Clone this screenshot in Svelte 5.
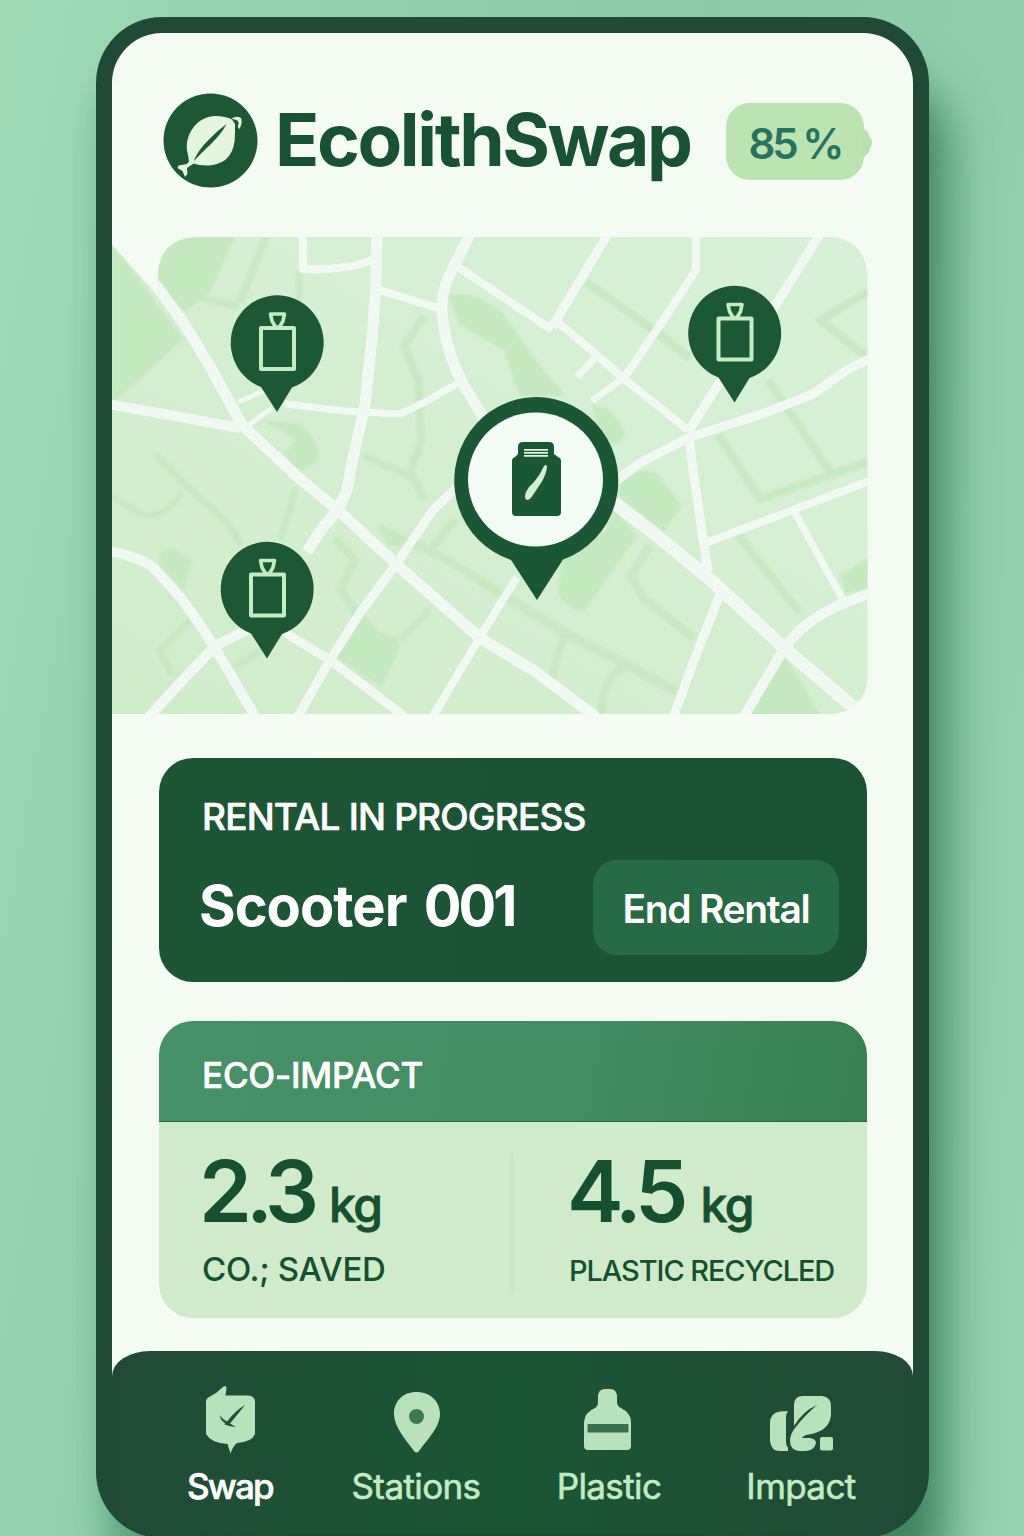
<script>
  const roads = [
    { w: 11, d: 'M106 230L158 288L185 325L212 370L242 425L300 479L338 510L397 565L480 638L536 672L596 717' },
    { w: 10, d: 'M108 404L175 416L240 428' },
    { w: 11, d: 'M377 232L376 285L372 338L365 405L353 458L347 490L338 510Q322 526 307 552' },
    { w: 10, d: 'M262 622L215 646L180 683L148 718' },
    { w: 8, d: 'M303 232V269Q350 271 376 258' },
    { w: 11, d: 'M471 232L455 264Q440 290 442 312Q446 355 465 387L486 422' },
    { w: 8, d: 'M378 290L442 309' },
    { w: 8, d: 'M458 267L500 295L552 330' },
    { w: 9, d: 'M608 234L552 327' },
    { w: 8, d: 'M556 321L597 355L623 378L688 430' },
    { w: 7, d: 'M596 357L577 377M623 378L592 401' },
    { w: 8, d: 'M696 232V270L660 325L624 378' },
    { w: 9, d: 'M820 234L777 303L718 385L688 432' },
    { w: 9, d: 'M872 357L845 371L813 394L765 413L690 437L640 463L612 484' },
    { w: 9, d: 'M689 438L693 470L708 572' },
    { w: 8, d: 'M872 480L793 510L708 542' },
    { w: 7, d: 'M795 513L843 600' },
    { w: 10, d: 'M872 592L840 605Q805 620 785 647L743 718' },
    { w: 13, d: 'M608 498L655 534L713 582L783 647L866 718' },
    { w: 9, d: 'M720 594L693 663L673 718' },
    { w: 10, d: 'M108 551Q135 555 153 567L180 597L197 620L215 648L256 718' },
    { w: 9, d: 'M284 632L330 660L404 716' },
    { w: 9, d: 'M297 718L330 660L360 613L397 563L433 510L456 488' },
    { w: 8, d: 'M432 718L480 637L517 577' },
    { w: 7, d: 'M285 404L345 411L400 414L425 402L460 382' },
    { w: 5, d: 'M246 427L272 408M238 402L264 391' }
  ];
  const lanes = [
    { w: 8, d: 'M266 237L240 302' },
    { w: 7, d: 'M200 298L238 306M299 272V300' },
    { w: 8, d: 'M424 316L404 346L418 380L421 440L410 472L425 500' },
    { w: 7, d: 'M364 456L410 476M155 454L182 482L225 520L242 545' },
    { w: 6, d: 'M112 496L140 514Q166 520 182 492M296 488L280 540' },
    { w: 8, d: 'M586 282L648 326L690 358' },
    { w: 8, d: 'M868 292L820 320L866 356M768 380L802 430L832 475' },
    { w: 8, d: 'M718 434L760 499L868 462M738 535L800 613' },
    { w: 9, d: 'M480 581L560 630L678 692' },
    { w: 8, d: 'M564 634L551 680M622 668Q600 684 602 714' },
    { w: 9, d: 'M650 545L631 576L645 600L694 638' },
    { w: 8, d: 'M380 528L440 556L500 592M455 520L432 548' },
    { w: 8, d: 'M334 538L355 560L340 590L362 620M400 640L430 610' },
    { w: 7, d: 'M190 620L160 650L172 675M236 667L268 645' }
  ];
  const patches = [
    'M112 243L183 339L116 401H112Z',
    'M150 237H235L210 292L185 312L155 280Z',
    'M448 296Q470 288 502 312L520 338L545 372L566 396L520 396L504 350L460 325Z',
    'M592 404L610 410Q630 432 622 440L600 450Z',
    'M625 470L655 472L682 506L664 532L618 496Z',
    'M610 505L637 536L606 580L584 612Q562 606 558 592L562 560L606 530Z',
    'M160 552L172 548L192 560L184 590L160 565Z',
    'M358 608L380 633L396 636L400 648L382 686L336 657Z',
    'M784 657L800 680L822 718H746Z',
    'M868 558L840 576L846 594L868 588Z',
    'M262 420L300 424Q320 440 318 460L300 472L284 454L296 440Z',
    'M378 524L392 530L404 546L388 546Z'
  ];
  const pins = [
    { x: 277, y: 342 },
    { x: 734.5, y: 332.5 },
    { x: 267, y: 588.5 }
  ];
  const tabs = ['Swap', 'Stations', 'Plastic', 'Impact'];
  const stats = [
    { value: '2.3', unit: 'kg', label: 'CO.; SAVED', kind: 'co2' },
    { value: '4.5', unit: 'kg', label: 'PLASTIC RECYCLED', kind: 'plastic' }
  ];
</script>

<div class="stage">
  <div class="phone">
    <main class="screen">
      <header>
        <svg class="logo" viewBox="163 93 95 95">
          <circle cx="210.5" cy="140.5" r="47" fill="#1c5833" />
          <path fill="#e3f6dc" d="M189 161.500L188 155Q185 145 189 135Q197 117 215 116Q226 116 232 119.500L235 124L235 134Q235 148 229 156Q223 164 210 165.500Q200 166 193.500 163.500L187 168L187.500 174L185 177L182.500 171L177.500 168L178.500 165.500L187 164Z" />
          <path fill="#1c5833" d="M226.500 124Q222 133 211 144Q201 153 193.500 161.500Q198 150 208.500 140Q217 131 226.500 124Z" />
          <path fill="#e3f6dc" d="M231.500 118.500Q237 115.500 241 118Q243 122 239.500 129Q237 127 238.500 124Q239 120.500 236 120Z" />
        </svg>
        <h1>EcolithSwap</h1>
        <div class="battery"><span>85 %</span>
          <svg class="nub" viewBox="0 0 9 32"><path d="M0 1L4 3Q6 5 6.500 9L8.500 12Q9.500 16 8 19L6.500 21Q6 26 3 27L0 31Z" fill="#b7e2ae" /></svg>
        </div>
      </header>

      <svg class="map" viewBox="112 237 756 477">
        <defs>
          <clipPath id="area">
            <path d="M112 243L155 293L160 289Q158 282 158 273Q160 240 195 237H833Q865 241 867.500 275V678Q866 709 834 714H112Z" />
          </clipPath>
          <linearGradient id="land" x1="0" y1="1" x2="1" y2="0">
            <stop offset="0" stop-color="#d0edca" /><stop offset="1" stop-color="#d7f1d6" />
          </linearGradient>
          <filter id="soft"><feGaussianBlur stdDeviation="1" /></filter>
        </defs>
        <g clip-path="url(#area)">
          <rect x="112" y="237" width="756" height="477" fill="url(#land)" />
          <g filter="url(#soft)">
            {#each patches as d}<path {d} fill="#c2e7bb" opacity=".85" />{/each}
            {#each lanes as l}<path d={l.d} stroke="#c4e8be" stroke-width={l.w} fill="none" opacity=".85" stroke-linejoin="round" />{/each}
          </g>
          {#each roads as r}<path d={r.d} stroke="#f0f9f1" stroke-width={r.w} fill="none" stroke-linejoin="round" />{/each}
        </g>
        {#each pins as p}
          <g transform="translate({p.x} {p.y})">
            <path fill="#1c5833" d="M-16 45A46.500 47.300 0 1 1 15 45.500L0 70Z" />
            <g fill="none" stroke="#c5ebc0" stroke-width="4" stroke-linejoin="round">
              <rect x="-16" y="-14" width="33" height="41" />
              <path stroke-width="3.600" d="M-6.500 -28H7.500L6 -21L2.500 -15H-1.500L-5 -21Z" />
            </g>
          </g>
        {/each}
        <path fill="#1a5735" d="M511 560A82 83.500 0 1 1 563 559.500L537 600Z" />
        <ellipse cx="535.500" cy="479.500" rx="67.500" ry="67" fill="#f3fbf5" />
        <path fill="#1a5735" d="M518 447Q518 442 523 442H549Q554 442 554 447V454L558 457Q561 458 561 461V512Q561 516 557 516H516Q512 516 512 512V461Q512 458 515 457L518 454Z" />
        <path stroke="#e5f5e5" stroke-width="1.800" d="M524 449.800H548M524 452.800H548M524 455.800H548" />
        <path fill="#d2f0cb" d="M544 466Q547 463.500 547 467.500Q546 475 541 483L532 496.500Q529 501 526 499.500Q524 497 526 492Q529 486 534 482Q540 475 544 466Z" />
      </svg>

      <section class="rental">
        <div class="caption">RENTAL IN PROGRESS</div>
        <div class="row">
          <h2>Scooter <span>001</span></h2>
          <button><span>End Rental</span></button>
        </div>
      </section>

      <section class="eco">
        <div class="head">ECO-IMPACT</div>
        <div class="stats">
          {#each stats as s}
            <div class="stat {s.kind}">
              <div class="amount"><strong>{s.value}</strong><em>{s.unit}</em></div>
              <div class="label">{s.label}</div>
            </div>
          {/each}
        </div>
      </section>
    </main>

    <nav>
      {#each tabs as t}
        <a class="tab-{t.toLowerCase()}" href="#{t}">
          {#if t === 'Swap'}
            <svg viewBox="195 1385 70 70"><path fill="#b9e2bb" d="M206 1402Q206 1398 210 1396.500L216 1393L223 1387Q226 1384.500 226.500 1388L225.500 1395.500H248Q255 1396 255 1402V1434Q252 1442 237 1443Q233 1446 230.500 1453.500L227.500 1444Q211 1443 206 1434Z" /><path fill="#1c5436" d="M220 1415.500Q223 1420 227 1421.500Q236 1410 245 1405Q238 1414 230 1423.500L236 1427Q230 1426.500 224.500 1424.500L225 1423Q220 1420 220 1415.500Z" /></svg>
          {:else if t === 'Stations'}
            <svg viewBox="381 1385 70 70"><path fill="#b9e2bb" d="M416.500 1392C430 1392 440 1401 440 1414C440 1427 427 1440 419 1451Q416.500 1454 414 1451C406 1440 394 1427 394 1414C394 1401 403 1392 416.500 1392Z" /><circle cx="416.500" cy="1416.500" r="7.500" fill="#3a7a51" /></svg>
          {:else if t === 'Plastic'}
            <svg viewBox="574 1385 70 70"><path fill="#b9e2bb" d="M598 1397Q598 1389 605 1389H610Q617 1389 617 1397V1402Q617 1406 621 1408Q631 1413 631 1422V1446Q631 1450 627 1450H588Q584 1450 584 1446V1422Q585 1412 595 1408Q598 1406 598 1402Z" /><rect x="587.500" y="1424" width="41" height="8.500" rx="1" fill="#35734c" /></svg>
          {:else}
            <svg viewBox="766 1385 70 70"><g fill="#b9e2bb"><path d="M788 1411L780 1411.500Q770 1413 770 1423V1441Q771 1451 780 1451H788V1447.500Q786 1446 786 1441V1417Q786 1414 788 1411Z" /><path d="M794 1405Q794 1396 803 1396H822Q831 1397 831 1406V1415Q830 1425 822 1430Q815 1434 806 1435Q803 1436 802 1438H810Q816 1439 816 1443Q814 1451 805 1451H799Q790 1450 790 1441Q790 1434 795 1428Q805 1415 817 1405Q803 1411 794 1426Z" /><rect x="820" y="1437" width="13" height="13.500" rx="2" /></g></svg>
          {/if}
          <span>{t}</span>
        </a>
      {/each}
    </nav>
  </div>
</div>

<style>
  :global(body) { margin: 0; }
  * { box-sizing: border-box; }
  .stage {
    height: 1536px;
    width: 1024px;
    padding: 17px 95px 0 96px;
    overflow: hidden;
    background: linear-gradient(100deg, #9fdab5 0%, #97d5b0 14%, #8ccaa6 55%, #97d4b0 100%);
    font-family: Inter, "Liberation Sans", sans-serif;
  }
  .phone {
    height: 1521px;
    padding: 16px 16px 0;
    border-radius: 66px;
    background: #214a36;
    box-shadow: 26px 60px 50px -8px rgba(40, 110, 72, .75), 0 40px 24px rgba(60, 140, 95, .22);
    display: flex;
    flex-direction: column;
  }
  .screen {
    height: 1344px;
    border-radius: 50px 50px 0 0;
    background: #f3fbf3;
    display: flex;
    flex-direction: column;
  }
  header {
    display: flex;
    align-items: center;
    height: 204px;
    padding: 5px 49px 0 51px;
  }
  .logo { width: 95px; height: 95px; flex: none; margin-top: 5px; }
  h1 {
    margin: 4px 0 0 17px;
    font-size: 73px;
    line-height: 90px;
    font-weight: 700;
    letter-spacing: -2.4px;
    color: #185233;
    white-space: nowrap;
  }
  .battery {
    position: relative;
    margin: 8px 0 0 auto;
    width: 138px;
    height: 77px;
    flex: none;
    border-radius: 24px;
    background: #bbe4b1;
    color: #27735d;
    font-size: 42px;
    line-height: 82px;
    font-weight: 600;
    text-align: center;
    letter-spacing: -3px;
    word-spacing: -1px;
    white-space: nowrap;
  }
  .nub { position: absolute; left: 137px; top: 25px; width: 9px; height: 32px; }
  .map { width: 756px; height: 477px; flex: none; }
  .rental {
    margin: 44px 46px 0 47px;
    height: 224px;
    padding: 37px 28px 0 43px;
    border-radius: 34px;
    background: linear-gradient(100deg, #1d5635, #195334);
    color: #fff;
  }
  .caption {
    font-size: 37px;
    line-height: 44px;
    font-weight: 500;
    letter-spacing: -.8px;
    -webkit-text-stroke: .6px currentColor;
    white-space: nowrap;
  }
  .row {
    display: flex;
    justify-content: space-between;
    align-items: center;
    margin-top: 21px;
    height: 95px;
  }
  h2 {
    margin: -3px 0 0 -3px;
    font-size: 56px;
    line-height: 68px;
    font-weight: 650;
    letter-spacing: -1px;
    white-space: nowrap;
  }
  h2 span { letter-spacing: -3px; margin-left: 5px; }
  button {
    width: 246px;
    height: 95px;
    padding: 3px 0 0;
    border: 0;
    border-radius: 24px;
    background: #266b45;
    color: #fff;
    font: 600 39px/46px Inter, sans-serif;
    letter-spacing: -1.3px;
    white-space: nowrap;
  }
  .eco {
    margin: 39px 46px 0 47px;
    height: 297px;
    border-radius: 34px;
    overflow: hidden;
    background: #cfebca;
    color: #15512f;
  }
  .head {
    height: 101px;
    padding: 31px 43px 0;
    border-bottom: 1px solid #206a42;
    background: linear-gradient(100deg, #469167, #428d62 60%, #38804f);
    color: #fff;
    font-size: 35px;
    line-height: 46px;
    font-weight: 500;
    letter-spacing: -.2px;
    -webkit-text-stroke: .6px currentColor;
  }
  .stats {
    display: flex;
    height: 170px;
    margin-top: 31px;
  }
  .stat.co2 { width: 355px; height: 140px; padding-left: 40px; border-right: 5px solid #c8e7c3; }
  .stat.plastic { padding-left: 53px; }
  .amount {
    display: flex;
    align-items: baseline;
    height: 78px;
    line-height: 78px;
    white-space: nowrap;
  }
  strong { font-size: 85px; font-weight: 600; letter-spacing: -6px; }
  em {
    font-style: normal;
    font-size: 48px;
    font-weight: 500;
    margin-left: 16px;
    letter-spacing: -1.5px;
    -webkit-text-stroke: .8px currentColor;
  }
  .plastic em { margin-left: 18px; }
  .label { white-space: nowrap; font-weight: 500; line-height: 40px; margin-top: 18px; }
  .co2 .label { font-size: 33px; letter-spacing: -.3px; padding-left: 3px; }
  .plastic .label { font-size: 29px; letter-spacing: -1.1px; margin-top: 20px; padding-left: 2px; }
  nav {
    display: grid;
    grid-template-columns: 186px 186px 200px 184px;
    height: 184px;
    margin-top: -26px;
    padding: 34px 0 0 25px;
    border-radius: 38px 38px 50px 50px / 25px 25px 50px 50px;
    background: linear-gradient(90deg, #214a36 0%, #1e5035 20%, #1b5634 50%, #1e5035 75%, #214a36 100%);
  }
  a {
    display: flex;
    flex-direction: column;
    align-items: center;
    color: #c3eac3;
    text-decoration: none;
    font-size: 35px;
    line-height: 44px;
    font-weight: 400;
    letter-spacing: -.6px;
    -webkit-text-stroke: .6px currentColor;
  }
  a svg { width: 70px; height: 70px; }
  a span { margin-top: 9px; }
  a.tab-swap { color: #fff; font-weight: 500; letter-spacing: -1.8px; }
</style>
